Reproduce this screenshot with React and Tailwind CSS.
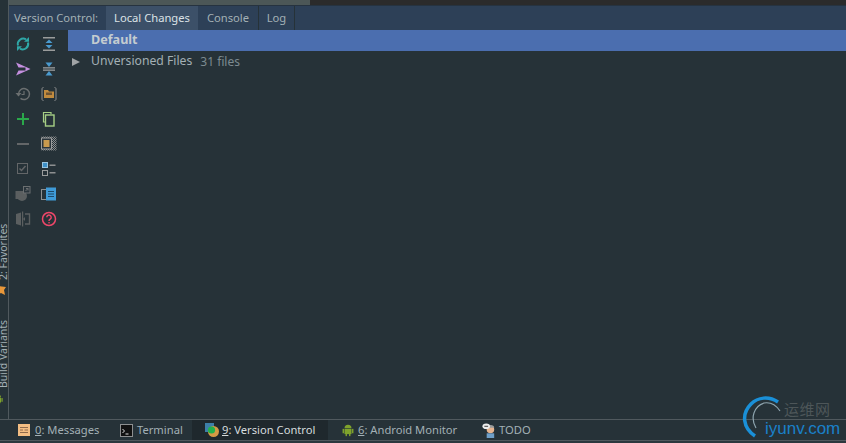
import React from 'react';

const font = { fontFamily: '"Noto Sans", "Open Sans", sans-serif' };

// toolbar icons, left column then right column
const SyncIcon = () => (
  <svg width="16" height="16" viewBox="0 0 16 16" fill="none" stroke="#2fa7a7" strokeWidth="2">
    <path d="M3 9.5A5.5 5.5 0 0 1 11 3.3" />
    <path d="M13 6.5A5.5 5.5 0 0 1 5 12.7" />
    <path d="M9 5.8h5V1z" fill="#2fa7a7" stroke="none" />
    <path d="M7 10.2H2V15z" fill="#2fa7a7" stroke="none" />
  </svg>
);
const SendIcon = () => (
  <svg width="16" height="16" viewBox="0 0 16 16">
    <path d="M1 1.5L15.5 8 1 14.5 3.5 9.5h7v-3h-7z" fill="#c58fe0" />
  </svg>
);
const RollbackIcon = () => (
  <svg width="16" height="16" viewBox="0 0 16 16" fill="none" stroke="#6b6f70" strokeWidth="1.5">
    <path d="M3.5 8a5.5 5.5 0 1 1 2 4.3" />
    <path d="M0.5 7h6L3.5 10.5z" fill="#6b6f70" stroke="none" />
    <path d="M9 5v3.5H6.5" strokeWidth="1.2" />
  </svg>
);
const PlusIcon = () => (
  <svg width="16" height="16" viewBox="0 0 16 16" fill="#2aa84a">
    <rect x="2" y="7" width="12" height="2" />
    <rect x="7" y="2" width="2" height="12" />
  </svg>
);
const MinusIcon = () => (
  <svg width="16" height="16" viewBox="0 0 16 16" fill="#636668">
    <rect x="2" y="7" width="12" height="2" />
  </svg>
);
const CheckIcon = () => (
  <svg width="16" height="16" viewBox="0 0 16 16" fill="none" stroke="#636668">
    <rect x="2.5" y="2.5" width="10" height="10" strokeWidth="1" />
    <path d="M4.5 7.5l2 2 4-4.5" strokeWidth="1.5" />
  </svg>
);
const ShelveIcon = () => (
  <svg width="16" height="16" viewBox="0 0 16 16">
    <rect x="0.5" y="5" width="9" height="8" fill="#5b5f60" />
    <circle cx="7" cy="10" r="5" fill="#5b5f60" />
    <rect x="8.5" y="0.5" width="6.5" height="6.5" fill="#2a353c" stroke="#6b6f70" />
    <path d="M10.5 5l2.5-2.5M11 2.5h2v2" stroke="#6b6f70" fill="none" />
  </svg>
);
const DiffIcon = () => (
  <svg width="16" height="16" viewBox="0 0 16 16">
    <path d="M1 3l5-1.5v13L1 13z" fill="#5b5f60" />
    <path d="M7 .5h1.2v15H7z" fill="#5b5f60" />
    <path d="M10 3h4.5v10H10" fill="none" stroke="#5b5f60" strokeWidth="1.4" />
    <path d="M10 6l-2 2 2 2z" fill="#5b5f60" />
  </svg>
);
const ExpandIcon = () => (
  <svg width="16" height="16" viewBox="0 0 16 16">
    <rect x="2" y="1" width="12" height="1.5" fill="#9a9c9c" />
    <rect x="2" y="13.5" width="12" height="1.5" fill="#9a9c9c" />
    <path d="M8 3.5l3.5 3.5h-7z" fill="#4a9bd0" />
    <path d="M8 12.5l3.5-3.5h-7z" fill="#4a9bd0" />
  </svg>
);
const CollapseIcon = () => (
  <svg width="16" height="16" viewBox="0 0 16 16">
    <path d="M8 6l3.5-4.5h-7z" fill="#4a9bd0" />
    <path d="M8 10l3.5 4.5h-7z" fill="#4a9bd0" />
    <rect x="2" y="6.2" width="12" height="1.3" fill="#9a9c9c" />
    <rect x="2" y="8.5" width="12" height="1.3" fill="#9a9c9c" />
  </svg>
);
const FolderIcon = () => (
  <svg width="16" height="16" viewBox="0 0 16 16" fill="none">
    <path d="M2.5 1.5c-1 0-1.5.5-1.5 1.5v10c0 1 .5 1.5 1.5 1.5M13.5 1.5c1 0 1.5.5 1.5 1.5v10c0 1-.5 1.5-1.5 1.5" stroke="#8d8f90" />
    <path d="M3 4h4l1 1.5h5V12H3z" fill="#c08a3e" />
    <rect x="5" y="6.5" width="6" height="2.5" fill="#6b5233" />
  </svg>
);
const CopyIcon = () => (
  <svg width="16" height="16" viewBox="0 0 16 16" fill="none" stroke="#a6cf85" strokeWidth="1.2">
    <path d="M10 3V1.5H2.5V11H4" />
    <rect x="4.5" y="4" width="8.5" height="11" strokeWidth="1.4" />
  </svg>
);
const CheckerIcon = () => (
  <svg width="16" height="16" viewBox="0 0 16 16">
    <defs>
      <pattern id="chk" width="2" height="2" patternUnits="userSpaceOnUse">
        <rect width="1" height="1" fill="#8d8f90" />
        <rect x="1" y="1" width="1" height="1" fill="#8d8f90" />
      </pattern>
    </defs>
    <rect x="0.5" y="0.5" width="15" height="14" fill="url(#chk)" />
    <rect x="0.5" y="2" width="10" height="11" fill="#2a353c" stroke="#9a9c9c" />
    <rect x="2.5" y="4" width="6" height="7" fill="#c89a4e" />
  </svg>
);
const ChecklistIcon = () => (
  <svg width="16" height="16" viewBox="0 0 16 16" fill="none">
    <rect x="1.5" y="1.5" width="5" height="5" fill="#3d8fc6" stroke="#9ac4de" />
    <rect x="1.5" y="9.5" width="5" height="5" stroke="#9a9c9c" />
    <rect x="8.5" y="3.5" width="6" height="1.5" fill="#8d8f90" />
    <rect x="8.5" y="11" width="6" height="1.5" fill="#8d8f90" />
  </svg>
);
const PreviewIcon = () => (
  <svg width="16" height="16" viewBox="0 0 16 16" fill="none">
    <rect x="0.5" y="3.5" width="6" height="10" stroke="#8d8f90" />
    <rect x="5" y="1.5" width="10" height="13" fill="#3f9bd8" />
    <path d="M7 5.5h6M7 8h6M7 10.5h6" stroke="#1d4a6a" />
  </svg>
);
const HelpIcon = () => (
  <svg width="16" height="16" viewBox="0 0 16 16" fill="none" stroke="#f0476a">
    <circle cx="8" cy="8" r="6.5" strokeWidth="1.5" />
    <path d="M5.8 6.3a2.2 2.2 0 1 1 3.4 1.8c-.8.5-1.2 1-1.2 1.9" strokeWidth="1.4" />
    <rect x="7.4" y="11" width="1.3" height="1.4" fill="#f0476a" stroke="none" />
  </svg>
);

const toolbarRows = [
  [SyncIcon, ExpandIcon],
  [SendIcon, CollapseIcon],
  [RollbackIcon, FolderIcon],
  [PlusIcon, CopyIcon],
  [MinusIcon, CheckerIcon],
  [CheckIcon, ChecklistIcon],
  [ShelveIcon, PreviewIcon],
  [DiffIcon, HelpIcon],
];

const AndroidIcon = ({ size = 14 }) => (
  <svg width={size} height={size} viewBox="0 0 16 16" fill="#7fa32c">
    <path d="M4 6a4 4 0 0 1 8 0z" />
    <rect x="4" y="6.7" width="8" height="6" />
    <rect x="1.8" y="6.7" width="1.6" height="5" />
    <rect x="12.6" y="6.7" width="1.6" height="5" />
    <rect x="5.2" y="12" width="1.6" height="3" />
    <rect x="9.2" y="12" width="1.6" height="3" />
  </svg>
);
const MessagesIcon = () => (
  <svg width="12" height="12" viewBox="0 0 12 12">
    <rect width="12" height="12" fill="#f2bd83" />
    <path d="M2 3.5h8M2 6h3M6.5 6H10M2 8.5h8" stroke="#8e6a4c" />
  </svg>
);
const TerminalIcon = () => (
  <svg width="13" height="13" viewBox="0 0 13 13" fill="none">
    <rect x="0.5" y="0.5" width="12" height="12" fill="#111" stroke="#8d8f90" />
    <path d="M2.5 5l2 2-2 2M5.5 10h3" stroke="#ddd" />
  </svg>
);
const VcsIcon = () => (
  <svg width="14" height="14" viewBox="0 0 14 14">
    <rect x="0" y="0" width="9" height="9" fill="#3d7fa8" />
    <circle cx="8.5" cy="8.5" r="5.5" fill="#d69a45" />
    <circle cx="6.5" cy="7" r="3.6" fill="#22b14c" />
  </svg>
);
const TodoIcon = () => (
  <svg width="15" height="15" viewBox="0 0 16 16">
    <circle cx="9" cy="7" r="4" fill="#e6b48f" />
    <rect x="5" y="11" width="8" height="5" fill="#6f9fc8" />
    <path d="M5 5a4 3 0 0 1 8 0z" fill="#9a9c9c" />
    <ellipse cx="4.5" cy="3.5" rx="4" ry="3" fill="#eee" />
    <path d="M2.5 3.5h4" stroke="#333" />
  </svg>
);

const BottomTab = ({ icon, hotkey, label, active, className }) => (
  <div className={`flex h-full shrink-0 items-center ${active ? 'bg-[#1f282d] text-[#d6dcdd]' : 'text-[#a3b0b5]'} ${className}`}>
    {icon}
    <span>
      {hotkey && <span className="underline">{hotkey}</span>}
      {label}
    </span>
  </div>
);

export default function App() {
  return (
    <div className="relative flex h-[443px] w-[846px] flex-col overflow-hidden bg-[#263238] text-[11.2px] leading-none" style={font}>
      <div className="flex min-h-0 flex-1">
        {/* collapsed side tabs */}
        <div className="flex w-[8px] shrink-0 flex-col items-end overflow-hidden pt-[230px] text-[10.5px] text-[#a3b0b5]">
          <div className="h-[50px] shrink-0 whitespace-nowrap text-center [writing-mode:vertical-rl] rotate-180">2: Favorites</div>
          <div className="mt-[5px] h-[10px] w-[8px] shrink-0">
            <svg width="8" height="10" viewBox="0 0 8 10" fill="#e8973a">
              <path d="M-2 1l8 1-2 3 1 5-4-2-4 2V3z" />
            </svg>
          </div>
          <div className="mt-[35px] h-[58px] shrink-0 whitespace-nowrap text-center [writing-mode:vertical-rl] rotate-180">Build Variants</div>
          <div className="-ml-[8px] mt-[5px] self-start">
            <AndroidIcon size={12} />
          </div>
        </div>
        <div className="w-px shrink-0 bg-[#50595e]" />

        <div className="flex min-w-0 flex-1 flex-col">
          <div className="flex h-[5px] shrink-0 bg-[#2b2b2b]">
            <div className="w-[301px] bg-[#4c5757]" />
          </div>

          {/* tool window tabs */}
          <div className="flex h-[25px] shrink-0 items-stretch border-t border-[#263340] bg-[#2d4057] text-[#a3b0b5]">
            <div className="flex w-[97px] items-center pl-[5px]">Version Control:</div>
            <div className="flex w-[92px] items-center justify-center bg-[#3c5068] text-[#dbe2e6]">Local Changes</div>
            <div className="flex w-[61px] items-center justify-center border-r border-[#263238]">Console</div>
            <div className="flex w-[36px] items-center justify-center border-r border-[#263238]">Log</div>
          </div>

          <div className="flex min-h-0 flex-1">
            {/* toolbar */}
            <div className="grid w-[59px] shrink-0 grid-cols-2 content-start gap-y-[9px] pl-[6px] pt-[6px]">
              {toolbarRows.map(([Left, Right], i) => (
                <React.Fragment key={i}>
                  <div className="h-[16px] w-[16px]"><Left /></div>
                  <div className="-ml-[1px] h-[16px] w-[16px]"><Right /></div>
                </React.Fragment>
              ))}
            </div>

            {/* changelist tree */}
            <div className="min-w-0 flex-1 text-[12.2px] text-[#a3b0b5]">
              <div className="flex h-[21px] items-center bg-[#4b6eaf] pl-[23px] text-[12.6px] font-bold text-[#c4ccd0]">Default</div>
              <div className="flex h-[21px] items-center">
                <span className="ml-[4px] h-0 w-0 border-y-[4.5px] border-l-[8px] border-y-transparent border-l-[#a0a4a6]" />
                <span className="ml-[11px]">Unversioned Files</span>
                <span className="ml-[8px] text-[12px] text-[#7d8b90]">31 files</span>
              </div>
            </div>
          </div>
        </div>
      </div>

      {/* bottom tool bar */}
      <div className="flex h-[21px] shrink-0 items-stretch border-t border-[#50595e] pl-[10px]">
        <BottomTab icon={<MessagesIcon />} hotkey="0" label=": Messages" className="w-[102px] gap-[5px] pl-[8px]" />
        <BottomTab icon={<TerminalIcon />} label="Terminal" className="w-[80px] gap-[4px] pl-[8px]" />
        <BottomTab icon={<VcsIcon />} hotkey="9" label=": Version Control" active className="w-[136px] gap-[3px] pl-[13px]" />
        <BottomTab icon={<AndroidIcon />} hotkey="6" label=": Android Monitor" className="w-[141px] gap-[3px] pl-[13px]" />
        <BottomTab icon={<TodoIcon />} label="TODO" className="gap-[2px] pl-[13px]" />
      </div>
      <div className="h-[3px] shrink-0 border-t border-[#50595e] bg-[#2c383e]" />

      {/* watermark */}
      <div className="absolute left-[742px] top-[394px] h-[44px] w-[100px]">
        <svg className="absolute left-0 top-0" width="50" height="48" viewBox="0 0 50 48" fill="none">
          <path d="M13 42C1 34-1 20 9 10 16 3 27 2 36 8" stroke="#1a90d8" strokeWidth="3.5" />
          <path d="M14 34C8 24 12 12 22 9c6-1 12 2 16 8" stroke="#8fa6b0" strokeWidth="1.2" />
        </svg>
        <span className="absolute left-[42px] top-[7px] text-[15px] tracking-[0.5px] text-[#4d5659]" style={{ fontFamily: '"Noto Sans CJK SC", sans-serif' }}>运维网</span>
        <span className="absolute left-[23px] top-[26px] text-[17px] text-[#1a80c8]" style={{ fontFamily: '"Liberation Sans", sans-serif' }}>iyunv.com</span>
      </div>
    </div>
  );
}
